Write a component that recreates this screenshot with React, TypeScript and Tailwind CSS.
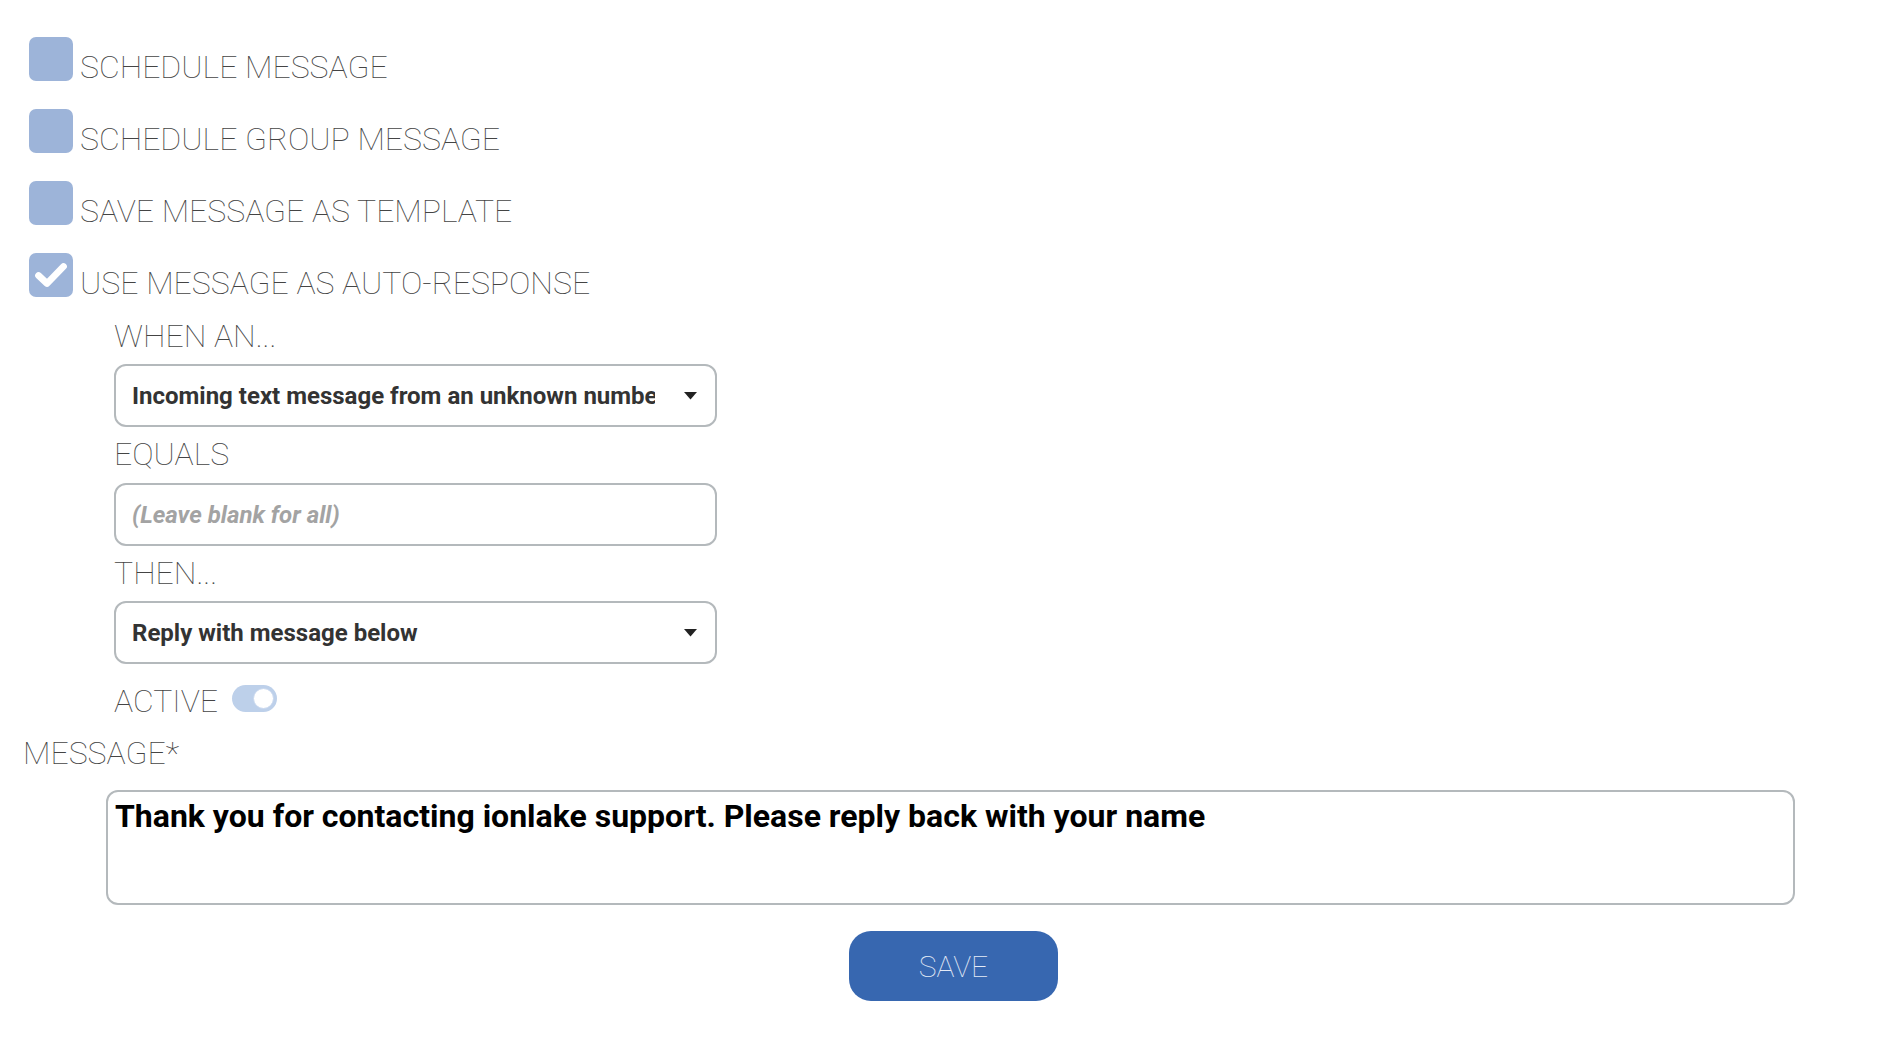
const OPTIONS = [
  { label: "SCHEDULE MESSAGE", checked: false },
  { label: "SCHEDULE GROUP MESSAGE", checked: false },
  { label: "SAVE MESSAGE AS TEMPLATE", checked: false },
  { label: "USE MESSAGE AS AUTO-RESPONSE", checked: true },
];

const labelCls = "text-[32px] leading-[32px] font-thin text-[#444]";

function Caret() {
  return (
    <svg width="13" height="8" viewBox="0 0 13 8" className="shrink-0">
      <path d="M0 0 L13 0 L6.5 7.5 Z" fill="#222" />
    </svg>
  );
}

function FakeSelect({ value }: { value: string }) {
  return (
    <div className="flex h-[63px] w-[603px] items-center rounded-[12px] border-2 border-[#b4b9bc] bg-white pl-4 pr-[18px]">
      <span className="w-[523px] overflow-hidden whitespace-nowrap text-[24px] font-bold text-[#333]">
        {value}
      </span>
      <div className="flex flex-1 justify-end">
        <Caret />
      </div>
    </div>
  );
}

export default function App() {
  return (
    <div
      className="min-h-screen bg-white pl-[23px] pt-[37px]"
      style={{ fontFamily: "Roboto, 'Liberation Sans', sans-serif" }}
    >
      <div className="flex flex-col gap-[28px] pl-[6px]">
        {OPTIONS.map((opt) => (
          <div key={opt.label} className="flex h-[44px] gap-[7px]">
            <div className="flex h-[44px] w-[44px] shrink-0 items-center justify-center rounded-[7px] bg-[#9db4d9]">
              {opt.checked && (
                <svg width="34" height="28" viewBox="0 0 30 24">
                  <path
                    d="M4 12.5 L11.5 19.5 L26 4.5"
                    fill="none"
                    stroke="white"
                    strokeWidth="6"
                    strokeLinecap="round"
                    strokeLinejoin="round"
                  />
                </svg>
              )}
            </div>
            <span className={`${labelCls} mt-[14px] whitespace-nowrap`}>
              {opt.label}
            </span>
          </div>
        ))}
      </div>

      <div className="flex flex-col pl-[91px]">
        <span className={`${labelCls} mt-[23px]`}>WHEN AN...</span>
        <div className="mt-[12px]">
          <FakeSelect value="Incoming text message from an unknown number" />
        </div>
        <span className={`${labelCls} mt-[11px]`}>EQUALS</span>
        <input
          className="mt-[13px] h-[63px] w-[603px] rounded-[12px] border-2 border-[#b4b9bc] bg-white pl-4 text-[24px] font-bold italic text-[#333] outline-none placeholder:text-[#a3a3a3]"
          placeholder="(Leave blank for all)"
        />
        <span className={`${labelCls} mt-[11px]`}>THEN...</span>
        <div className="mt-[12px]">
          <FakeSelect value="Reply with message below" />
        </div>
        <div className="mt-[21px] flex items-start gap-[14px]">
          <span className={labelCls}>ACTIVE</span>
          <div className="flex h-[27px] w-[45px] items-center justify-end rounded-full bg-[#bdd0ea] pr-[3px]">
            <div className="h-[21px] w-[21px] rounded-full border border-[#c8d7ee] bg-white" />
          </div>
        </div>
      </div>

      <span className={`${labelCls} mt-[20px] block`}>MESSAGE*</span>

      <div className="pl-[83px] pr-[89px]">
        <textarea
          readOnly
          defaultValue="Thank you for contacting ionlake support. Please reply back with your name"
          className="mt-[21px] block h-[115px] w-full resize-none rounded-[12px] border-2 border-[#b4b9bc] bg-white px-[7px] pt-0 text-[32px] font-bold text-black outline-none"
        />
      </div>

      <div className="flex justify-center pt-[26px] pb-10">
        <button className="flex h-[70px] w-[209px] items-center justify-center rounded-[22px] bg-[#3767b0] text-[30px] font-thin text-[#e4ebf7]">
          SAVE
        </button>
      </div>
    </div>
  );
}
